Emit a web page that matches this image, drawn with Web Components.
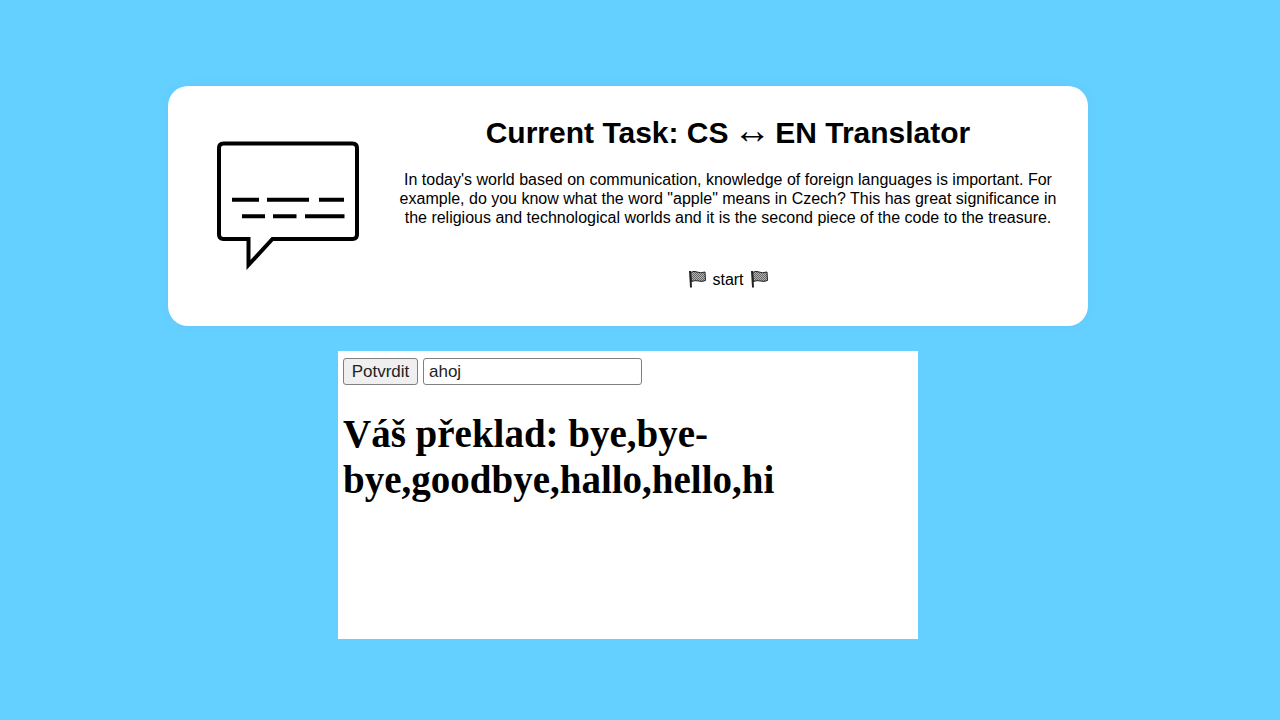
<!DOCTYPE html>
<html lang="en">
<head>
<meta charset="utf-8">
<meta name="viewport" content="width=device-width, initial-scale=1">
<title>CS ↔ EN Translator</title>
<style>
html { background: #64d0ff; }
body { margin: 0; font-family: "Liberation Sans", Arial, sans-serif; font-size: 16px; color: #000; }
.arrow { margin: 0 -4px; font: 38px/1 "Liberation Serif", "Times New Roman", serif; line-height: 0; }
</style>
</head>
<body>
<task-page>
  <task-card>
    <speech-icon slot="icon"></speech-icon>
    <span slot="title">Current Task: CS <span class="arrow">↔</span> EN Translator</span>
    In today's world based on communication, knowledge of foreign languages is important. For example, do you know what the word "apple" means in Czech? This has great significance in the religious and technological worlds and it is the second piece of the code to the treasure.
    <start-line slot="footer">start</start-line>
  </task-card>
  <word-translator word="ahoj" result="bye,bye-bye,goodbye,hallo,hello,hi"></word-translator>
</task-page>
<script>
const define = (name, html, setup) => {
  const template = document.createElement('template');
  template.innerHTML = html;
  customElements.define(name, class extends HTMLElement {
    constructor() {
      super();
      this.attachShadow({ mode: 'open' }).append(template.content.cloneNode(true));
    }
    connectedCallback() { if (setup) setup(this, this.shadowRoot); }
  });
};

define('task-page', `
<style>
  :host { display: block; }
  main { display: flex; flex-direction: column; align-items: center; gap: 25px; padding: 86px 40px 80px 16px; }
</style>
<main><slot></slot></main>`);

define('task-card', `
<style>
  :host { display: block; width: 100%; max-width: 920px; box-sizing: border-box; padding: 20px;
    background: #fff; border-radius: 20px; box-shadow: 0 0 6px rgba(102, 187, 255, .5); }
  article { display: grid; grid-template-columns: 200px 1fr; min-height: 200px; }
  .text { text-align: center; padding: 8px 10px 0; }
  h1 { margin: 0 0 18px; font-size: 30px; line-height: 38px; }
  p { margin: 0; line-height: 19px; }
  footer { margin-top: 42px; line-height: 19px; }
</style>
<article>
  <slot name="icon"></slot>
  <div class="text">
    <h1><slot name="title"></slot></h1>
    <p><slot></slot></p>
    <footer><slot name="footer"></slot></footer>
  </div>
</article>`);

define('speech-icon', `
<style>:host, svg { display: block; width: 200px; height: 200px; }</style>
<svg viewBox="188 106 200 200" fill="none" stroke="#000" stroke-width="4" aria-hidden="true">
  <path d="M223.500 143.500H352.500Q357 143.500 357 148V234.500Q357 239 352.500 239H272.500L248.500 265V239H223.500Q219 239 219 234.500V148Q219 143.500 223.500 143.500Z"/>
  <path d="M232 199.700H259M267 199.700H309M319 199.700H344M242 216.300H265M273 216.300H296.500M305 216.300H344.500"/>
</svg>`);

define('flag-icon', `
<style>:host { display: block; width: 20px; height: 20px; } svg { display: block; }</style>
<svg width="20" height="20" viewBox="0 0 20 20" aria-hidden="true">
  <defs><pattern id="check" width="2" height="2" patternUnits="userSpaceOnUse">
    <rect width="2" height="2" fill="#b5b5b5"/><path d="M0 0h1v1H0zM1 1h1v1H1z" fill="#666"/></pattern></defs>
  <path d="M3.500 3.500Q7 1.500 10 3T18 3L18.500 11.500Q15 13 11.500 12T4.500 12.500Z" fill="url(#check)" stroke="#222"/>
  <path d="M3 2L4 18.500" stroke="#222" stroke-width="2"/>
</svg>`);

define('start-line', `
<style>:host { display: flex; justify-content: center; align-items: center; gap: 5px; }</style>
<flag-icon></flag-icon><span><slot></slot></span><flag-icon></flag-icon>`);

define('word-translator', `
<style>
  :host { display: block; width: 100%; max-width: 580px; min-height: 288px; box-sizing: border-box;
    padding: 7px 5px; background: #fff; }
  form { display: flex; gap: 5px; }
  button, input { box-sizing: border-box; height: 27px; border: 1px solid #808080; border-radius: 3px;
    font: 17px "Liberation Sans", Arial, sans-serif; color: #222; }
  button { width: 75px; padding: 0; background: #efefef; }
  input { width: 219px; min-width: 0; padding: 0 5px; background: #fff; }
  h2 { margin: 26px 0 0; font: bold 39px/46px "Liberation Serif", "Times New Roman", serif; }
</style>
<form>
  <button type="submit">Potvrdit</button>
  <input type="text" aria-label="Slovo">
</form>
<h2 aria-live="polite"></h2>`, (host, root) => {
  root.querySelector('input').value = host.getAttribute('word');
  root.querySelector('h2').textContent = 'Váš překlad: ' + host.getAttribute('result');
  root.querySelector('form').addEventListener('submit', e => e.preventDefault());
});
</script>
</body>
</html>
